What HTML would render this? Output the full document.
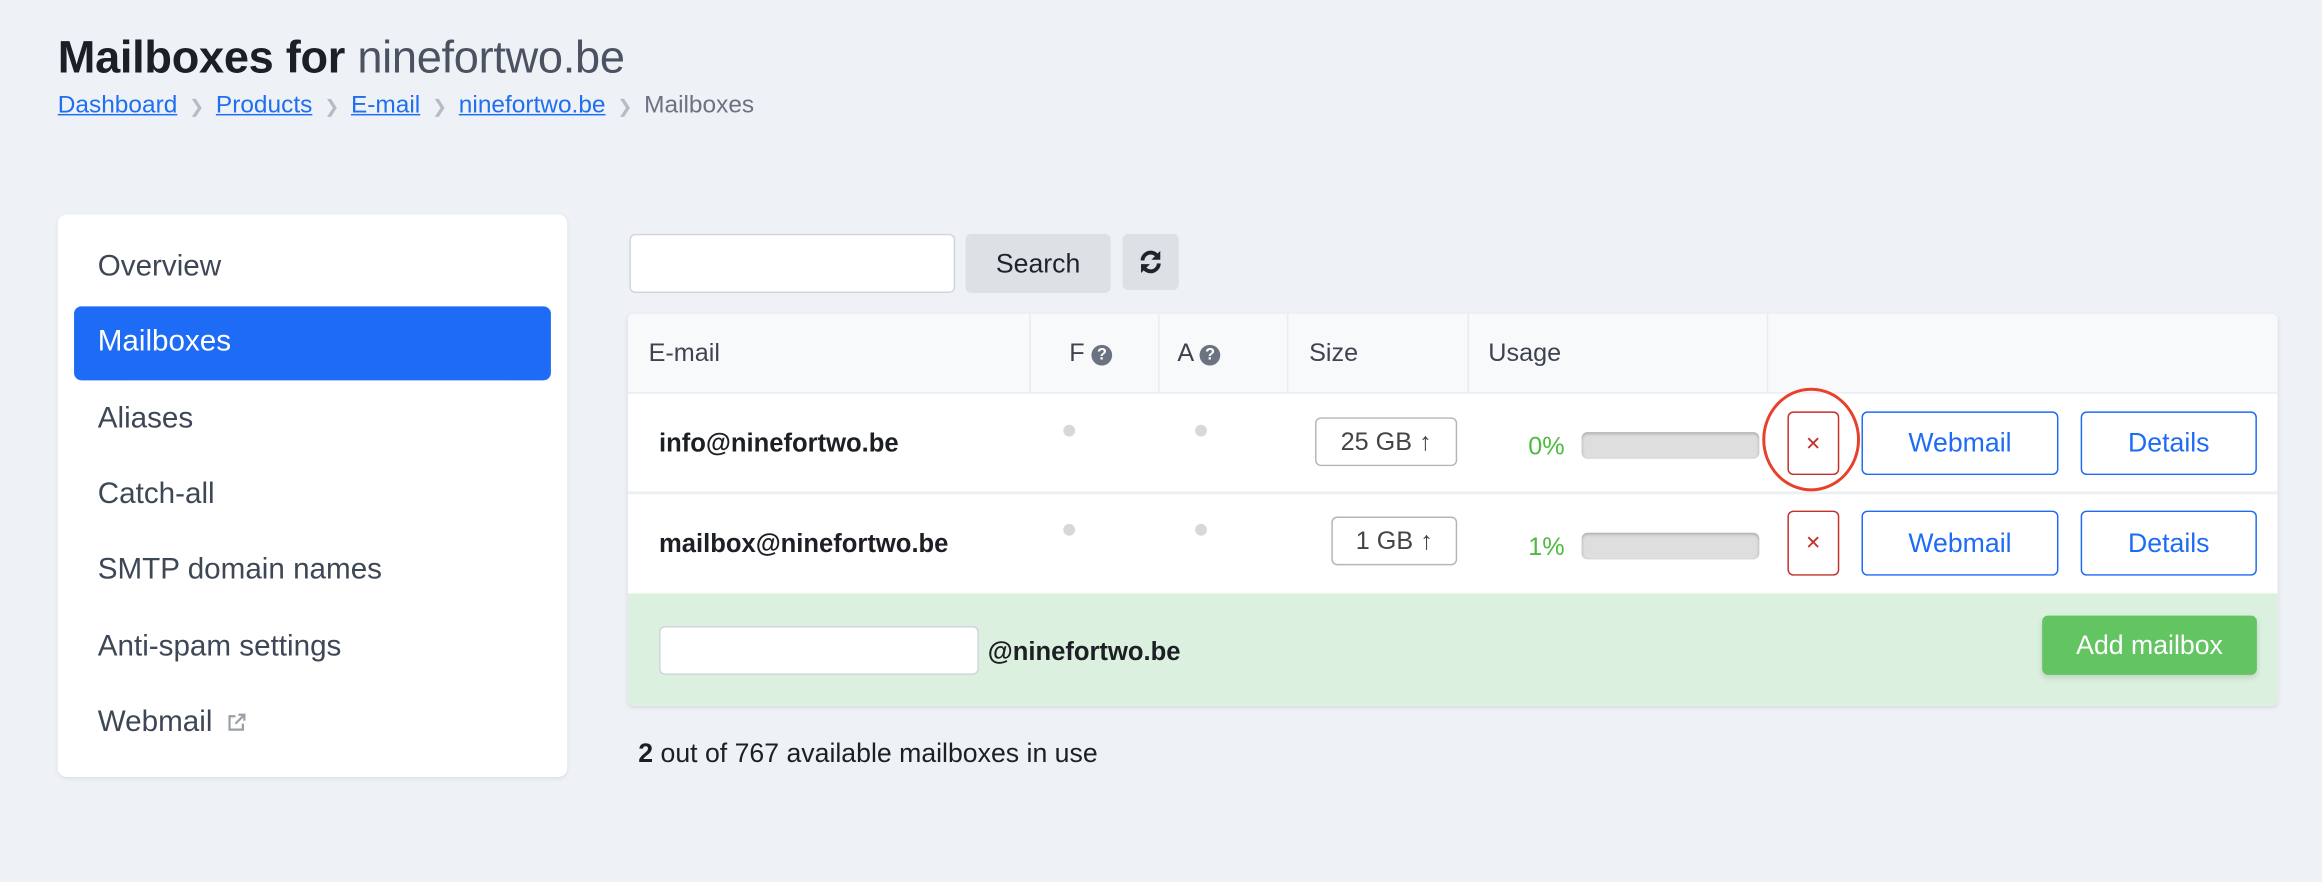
<!DOCTYPE html>
<html><head><meta charset="utf-8"><style>
html,body{margin:0;padding:0;width:2322px;height:882px;overflow:hidden;background:#eef1f6}
#s{position:absolute;left:0;top:0;width:1568px;height:596px;transform:scale(1.4809,1.4799);transform-origin:0 0;font-family:"Liberation Sans",sans-serif}
.a{position:absolute}
.bc a{color:#1f6ff0;text-decoration:underline}
.bc .sep{color:#b6bcc6;margin:0 8px;font-size:12px}
.nav{position:absolute;left:66px;font-size:20px;color:#3d4756}
.btn{position:absolute;box-sizing:border-box;border-radius:4px;display:flex;align-items:center;justify-content:center}
.out{border:1.5px solid #1e6bf5;color:#1e6bf5;font-size:18px;background:#fff}
.x{border:1.5px solid #c4302b;color:#c4302b;font-size:13px;background:#fff}
.sz{border:1.5px solid #b5b5b5;color:#444;font-size:17px;background:#fff}
.dot{position:absolute;width:8px;height:8px;border-radius:50%;background:#d8d8d8}
.bar{position:absolute;left:1068px;width:120px;height:18px;border-radius:4px;background:#dedede;box-shadow:inset 0 1px 2px rgba(0,0,0,.25)}
.pct{position:absolute;color:#4dbb3e;font-size:17px}
.em{position:absolute;left:445px;font-weight:bold;font-size:17.3px;color:#1c1f24}
.th{position:absolute;top:229px;font-size:17px;color:#3d4450}
.q{display:inline-block;width:14px;height:14px;border-radius:50%;background:#6b7280;color:#fff;font-size:11px;font-weight:bold;text-align:center;line-height:14px;vertical-align:1px}
.vl{position:absolute;top:212px;height:53px;width:1px;background:#e8ebef}
</style></head><body><div id="s">
<div class="a" style="left:39px;top:22px;font-size:30.5px;color:#1c1f26;font-weight:bold;letter-spacing:-0.2px">Mailboxes for <span style="font-weight:normal;color:#4b5261">ninefortwo.be</span></div>
<div class="a bc" style="left:39px;top:62px;font-size:16.5px;color:#6b7280"><a>Dashboard</a><span class="sep">❯</span><a>Products</a><span class="sep">❯</span><a>E-mail</a><span class="sep">❯</span><a>ninefortwo.be</a><span class="sep">❯</span>Mailboxes</div>

<div class="a" style="left:39px;top:145px;width:344px;height:380px;background:#fff;border-radius:6px;box-shadow:0 1px 3px rgba(0,0,0,.08)"></div>
<div class="nav" style="top:169px">Overview</div>
<div class="a" style="left:50px;top:207px;width:322px;height:50px;background:#1e6bf5;border-radius:5px"></div>
<div class="nav" style="top:220px;color:#fff">Mailboxes</div>
<div class="nav" style="top:272px">Aliases</div>
<div class="nav" style="top:323px">Catch-all</div>
<div class="nav" style="top:374px">SMTP domain names</div>
<div class="nav" style="top:426px">Anti-spam settings</div>
<div class="nav" style="top:477px">Webmail <svg width="14" height="14" viewBox="0 0 14 14" style="vertical-align:-1px;margin-left:4px"><path d="M6 3H2v9h9V8M8 2h4v4M12 2L6 8" fill="none" stroke="#9aa0a8" stroke-width="1.5"/></svg></div>

<div class="a" style="left:425px;top:158px;width:220px;height:40px;box-sizing:border-box;border:1.5px solid #d0d5dd;border-radius:4px;background:#fff"></div>
<div class="btn" style="left:652px;top:158px;width:98px;height:40px;background:#dde1e6;color:#1f232a;font-size:18px">Search</div>
<div class="btn" style="left:758px;top:158px;width:38px;height:38px;background:#dde1e6"><svg width="18" height="18" viewBox="0 0 18 18"><path d="M3.5 8A5.5 5.5 0 0 1 13.5 5M14.5 10A5.5 5.5 0 0 1 4.5 13" fill="none" stroke="#1f232a" stroke-width="2.6"/><path d="M15.5 1.5v6h-6zM2.5 16.5v-6h6z" fill="#1f232a"/></svg></div>

<div class="a" style="left:424px;top:212px;width:1114px;height:265px;background:#fff;border-radius:4px;box-shadow:0 1px 3px rgba(0,0,0,.1);overflow:hidden">
<div class="a" style="left:0;top:0;width:1114px;height:53px;background:#f8f9fb;border-bottom:1.5px solid #e9ecf0"></div>
<div class="a" style="left:0;top:120px;width:1114px;height:1.5px;background:#edf0f3"></div>
<div class="a" style="left:0;top:189px;width:1114px;height:76px;background:#dbf0de"></div>
</div>
<div class="vl" style="left:695px"></div><div class="vl" style="left:782px"></div><div class="vl" style="left:869px"></div><div class="vl" style="left:991px"></div><div class="vl" style="left:1193px"></div>
<div class="th" style="left:438px">E-mail</div>
<div class="th" style="left:722px">F <span class="q">?</span></div>
<div class="th" style="left:795px">A <span class="q">?</span></div>
<div class="th" style="left:884px">Size</div>
<div class="th" style="left:1005px">Usage</div>

<div class="em" style="top:289px">info@ninefortwo.be</div>
<div class="dot" style="left:718px;top:287px"></div><div class="dot" style="left:807px;top:287px"></div>
<div class="btn sz" style="left:888px;top:282px;width:96px;height:33px">25 GB ↑</div>
<div class="pct" style="left:1032px;top:292px">0%</div><div class="bar" style="top:292px"></div>
<div class="btn x" style="left:1207px;top:278px;width:35px;height:43px">✕</div>
<div class="btn out" style="left:1257px;top:278px;width:133px;height:43px">Webmail</div>
<div class="btn out" style="left:1405px;top:278px;width:119px;height:43px">Details</div>
<div class="a" style="left:1190px;top:262px;width:66px;height:70px;box-sizing:border-box;border:2.5px solid #e8402a;border-radius:50%"></div>

<div class="em" style="top:357px">mailbox@ninefortwo.be</div>
<div class="dot" style="left:718px;top:354px"></div><div class="dot" style="left:807px;top:354px"></div>
<div class="btn sz" style="left:899px;top:349px;width:85px;height:33px">1 GB ↑</div>
<div class="pct" style="left:1032px;top:360px">1%</div><div class="bar" style="top:360px"></div>
<div class="btn x" style="left:1207px;top:345px;width:35px;height:44px">✕</div>
<div class="btn out" style="left:1257px;top:345px;width:133px;height:44px">Webmail</div>
<div class="btn out" style="left:1405px;top:345px;width:119px;height:44px">Details</div>

<div class="a" style="left:445px;top:423px;width:216px;height:33px;box-sizing:border-box;border:1.5px solid #d0d5dd;border-radius:4px;background:#fff"></div>
<div class="em" style="left:667px;top:430px">@ninefortwo.be</div>
<div class="btn" style="left:1379px;top:416px;width:145px;height:40px;background:#63c462;color:#fff;font-size:18px;box-shadow:0 2px 4px rgba(0,0,0,.12)">Add mailbox</div>

<div class="a" style="left:431px;top:499px;font-size:18px;color:#1c1f24"><b>2</b> out of 767 available mailboxes in use</div>
</div></body></html>
